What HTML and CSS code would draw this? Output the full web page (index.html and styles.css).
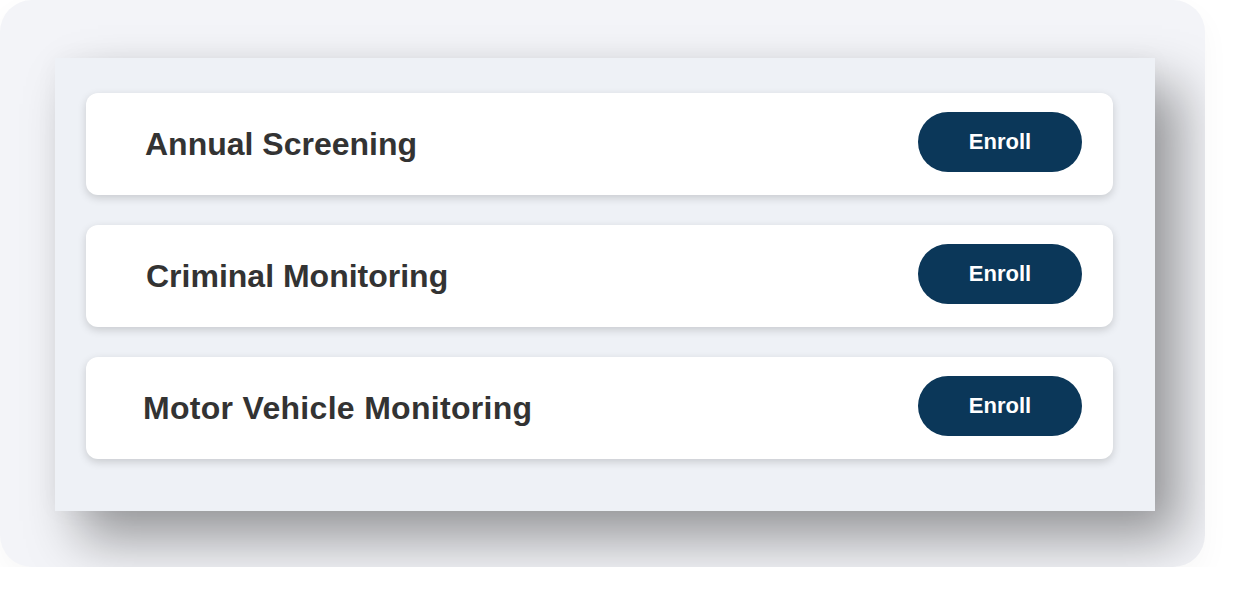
FILE: index.html
```html
<!DOCTYPE html>
<html>
<head>
<meta charset="utf-8">
<link rel="stylesheet" href="styles.css">
</head>
<body>
<div class="frame">
  <div class="panel">
    <div class="card">
      <span class="title">Annual Screening</span>
      <button class="enroll">Enroll</button>
    </div>
    <div class="card">
      <span class="title t2">Criminal Monitoring</span>
      <button class="enroll">Enroll</button>
    </div>
    <div class="card">
      <span class="title t3">Motor Vehicle Monitoring</span>
      <button class="enroll">Enroll</button>
    </div>
  </div>
</div>
</body>
</html>
```

FILE: styles.css
```css
html, body {
  margin: 0;
  padding: 0;
  background: #ffffff;
  font-family: "Liberation Sans", Arial, sans-serif;
}

.frame {
  width: 1205px;
  height: 567px;
  box-sizing: border-box;
  background: #f3f4f8;
  border-radius: 32px;
  overflow: hidden;
  padding: 58px 0 0 55px;
  box-shadow: 0 12px 30px rgba(0, 0, 0, 0.035);
}

.panel {
  width: 1100px;
  height: 453px;
  box-sizing: border-box;
  background: #eef1f6;
  padding: 35px 42px 0 31px;
  display: flex;
  flex-direction: column;
  gap: 30px;
  box-shadow: 25px 28px 50px rgba(0, 0, 0, 0.38), 0 0 24px rgba(0, 0, 0, 0.035);
}

.card {
  height: 102px;
  background: #ffffff;
  border-radius: 12px;
  box-shadow: 0 3px 8px rgba(0, 0, 0, 0.16);
  display: flex;
  align-items: center;
  justify-content: space-between;
  padding: 0 31px 0 59px;
}

.title {
  font-size: 32px;
  font-weight: bold;
  color: #333333;
}

.t2 { margin-left: 1px; }
.t3 { margin-left: -2px; letter-spacing: 0.3px; }

.enroll {
  width: 164px;
  height: 60px;
  margin-top: -4px;
  border: none;
  border-radius: 30px;
  background: #0b3759;
  color: #ffffff;
  font-family: "Liberation Sans", Arial, sans-serif;
  font-size: 22px;
  font-weight: bold;
  padding: 0;
}
```
